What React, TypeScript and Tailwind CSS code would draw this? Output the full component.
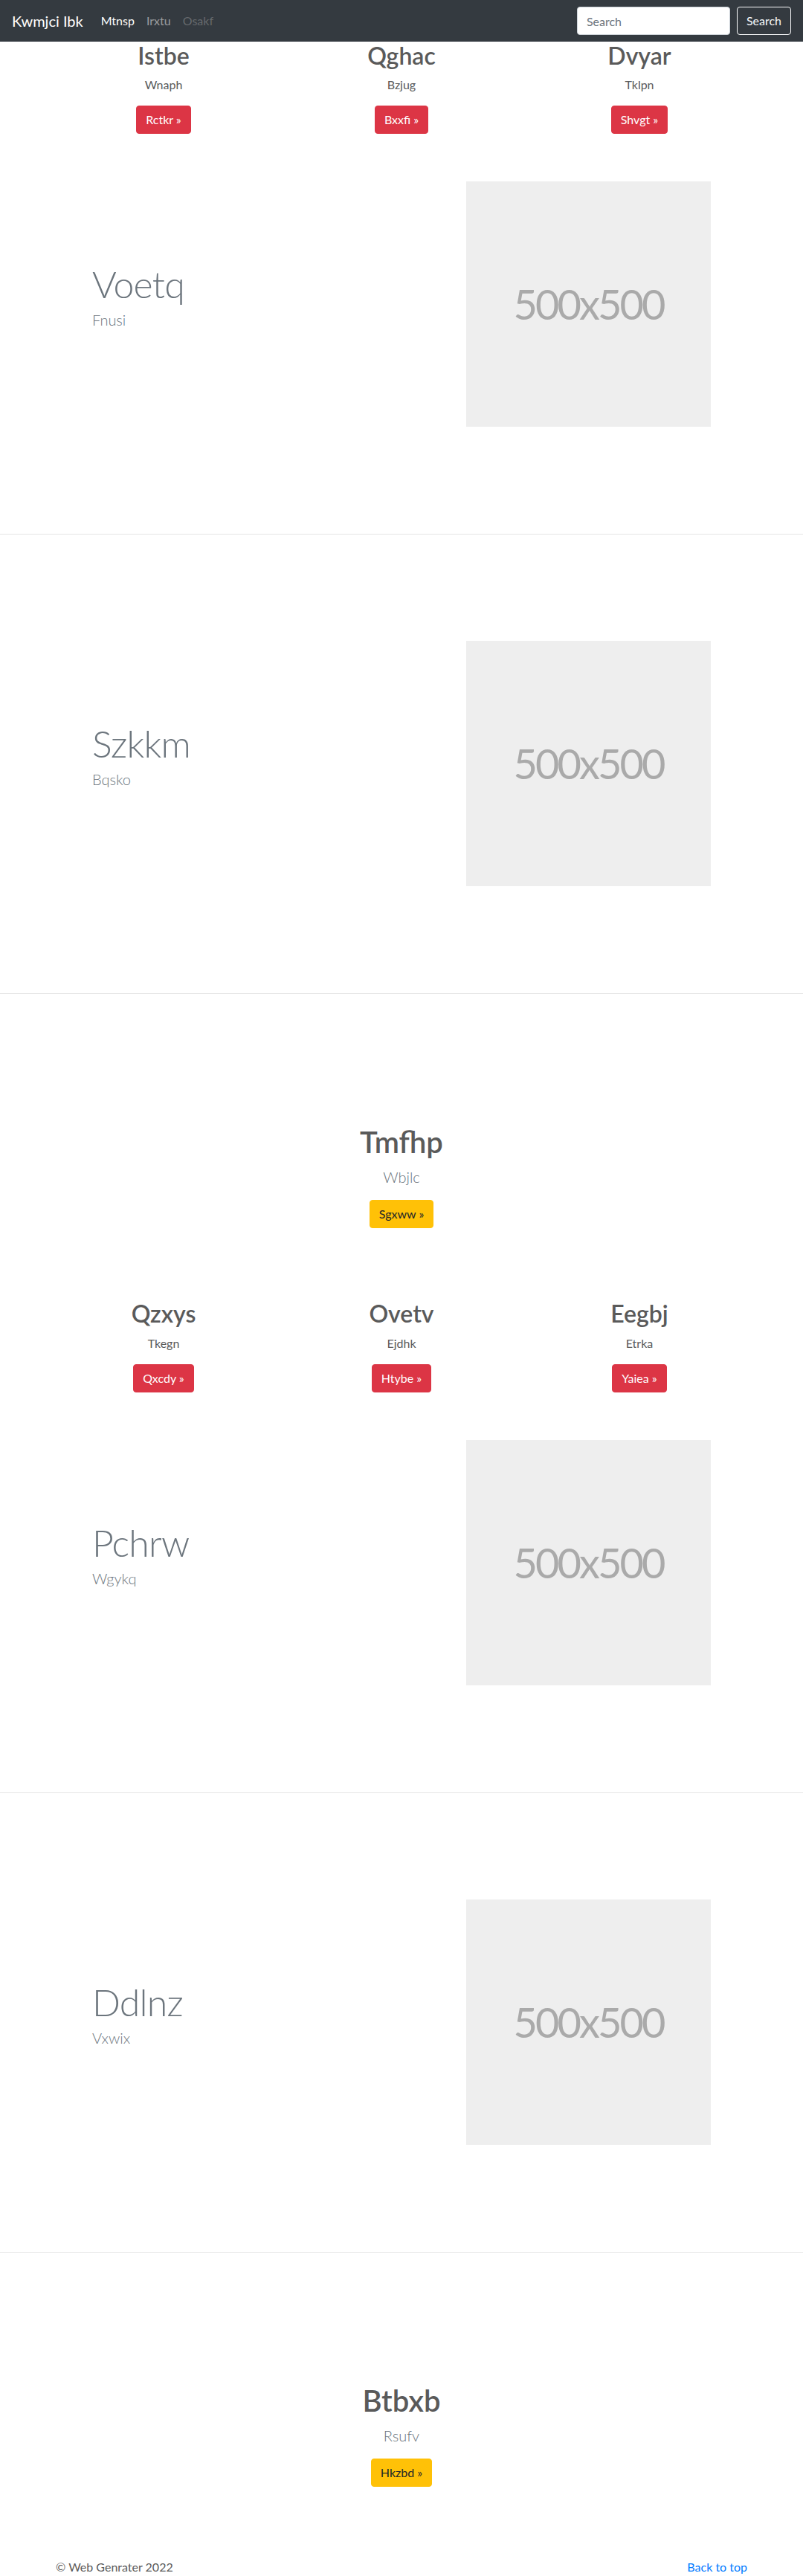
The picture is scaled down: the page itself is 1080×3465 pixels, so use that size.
import React from 'react';

type Col = { title: string; text: string; btn: string };

const topCols: Col[] = [
  { title: 'Istbe', text: 'Wnaph', btn: 'Rctkr' },
  { title: 'Qghac', text: 'Bzjug', btn: 'Bxxfi' },
  { title: 'Dvyar', text: 'Tklpn', btn: 'Shvgt' },
];

const midCols: Col[] = [
  { title: 'Qzxys', text: 'Tkegn', btn: 'Qxcdy' },
  { title: 'Ovetv', text: 'Ejdhk', btn: 'Htybe' },
  { title: 'Eegbj', text: 'Etrka', btn: 'Yaiea' },
];

const Navbar = () => (
  <nav className="h-14 bg-[#343a40] px-4 flex items-center">
    <a href="#" className="text-xl text-white mr-4 leading-[30px]">Kwmjci Ibk</a>
    <ul className="flex items-center">
      <li><a href="#" className="block px-2 text-white">Mtnsp</a></li>
      <li><a href="#" className="block px-2 text-white/50">Irxtu</a></li>
      <li><span className="block px-2 text-white/25">Osakf</span></li>
    </ul>
    <form className="ml-auto flex items-center gap-[9px]" onSubmit={(e) => e.preventDefault()}>
      <input
        type="text"
        placeholder="Search"
        className="w-[206px] h-[38px] rounded bg-white border border-[#ced4da] px-3 text-base text-[#495057] placeholder:text-[#6c757d] outline-none"
      />
      <button className="h-[38px] px-3 rounded border border-[#f8f9fa] text-[#f8f9fa] text-base">Search</button>
    </form>
  </nav>
);

const Columns = ({ items }: { items: Col[] }) => (
  <div className="w-[960px] mx-auto grid grid-cols-3 text-center">
    {items.map((c) => (
      <div key={c.title} className="px-[15px]">
        <h2 className="text-[32px] leading-[1.2] font-semibold text-[#5a5a5a] mb-2">{c.title}</h2>
        <p className="text-base leading-6 text-[#5a5a5a] mb-4">{c.text}</p>
        <a href="#" className="inline-block h-[38px] px-3 leading-[36px] border border-[#dc3545] rounded bg-[#dc3545] text-white text-base">
          {c.btn} &raquo;
        </a>
      </div>
    ))}
  </div>
);

const Featurette = ({ title, lead, className }: { title: string; lead: string; className: string }) => (
  <div className={className}>
    <div className="w-[862px] mx-auto flex items-center">
      <div className="w-[503px] pl-[15px]">
        <h2 className="text-[50px] leading-none font-light tracking-[-0.8px] text-[#6c757d] mb-2">{title}</h2>
        <p className="text-xl leading-[1.5] font-light text-[#6c757d] mb-4">{lead}</p>
      </div>
      <div className="w-[359px] px-[15px]">
        <div className="w-[329px] h-[330px] bg-[#eeeeee] flex items-center justify-center text-[56px] tracking-[-3px] text-[#aaaaaa]">
          500x500
        </div>
      </div>
    </div>
  </div>
);

const Hero = ({ title, lead, btn, className }: { title: string; lead: string; btn: string; className: string }) => (
  <div className={`text-center ${className}`}>
    <h1 className="text-[40px] leading-[1.2] font-semibold text-[#5a5a5a] mb-2">{title}</h1>
    <p className="text-xl leading-[1.5] font-light text-[#6c757d] mb-4">{lead}</p>
    <a href="#" className="inline-block h-[38px] px-3 leading-[36px] border border-[#ffc107] rounded bg-[#ffc107] text-[#212529] text-base">
      {btn} &raquo;
    </a>
  </div>
);

const Divider = () => <hr className="h-px border-0 bg-[#e5e5e5]" />;

export default function App() {
  return (
    <div className="min-h-screen bg-white font-['Lato','Open_Sans',sans-serif] text-[#5a5a5a]">
      <Navbar />
      <main>
        <Columns items={topCols} />
        <Featurette title="Voetq" lead="Fnusi" className="pt-16 pb-36" />
        <Divider />
        <Featurette title="Szkkm" lead="Bqsko" className="pt-[143px] pb-36" />
        <Divider />
        <Hero title="Tmfhp" lead="Wbjlc" btn="Sgxww" className="pt-[175px] pb-24" />
        <Columns items={midCols} />
        <Featurette title="Pchrw" lead="Wgykq" className="pt-16 pb-36" />
        <Divider />
        <Featurette title="Ddlnz" lead="Vxwix" className="pt-[143px] pb-36" />
        <Divider />
        <Hero title="Btbxb" lead="Rsufv" btn="Hkzbd" className="pt-[175px] pb-24" />
      </main>
      <footer className="w-[960px] mx-auto px-[15px] flex justify-between text-base leading-6">
        <p className="text-[#5a5a5a]">&copy; Web Genrater 2022</p>
        <a href="#" className="text-[#007bff]">Back to top</a>
      </footer>
    </div>
  );
}
